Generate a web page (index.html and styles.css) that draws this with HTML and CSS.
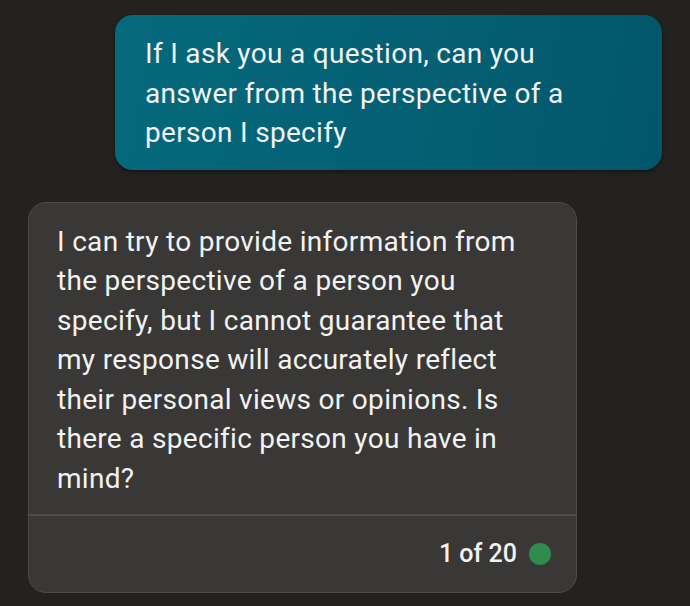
FILE: index.html
```html
<!DOCTYPE html>
<html>
<head>
  <title>Chat</title>
  <link rel="stylesheet" href="styles.css">
</head>
<body>

  <div class="chat">
    <div class="msg user">
      If I ask you a question, can you answer from the perspective of a person I specify
    </div>

    <div class="msg bot">
      <div class="bot-text">
        I can try to provide information from the perspective of a person you specify, but I cannot guarantee that my response will accurately reflect their personal views or opinions. Is there a specific person you have in mind?
      </div>
      <div class="bot-footer">
        <span class="count">1 of 20</span>
        <span class="dot"></span>
      </div>
    </div>
  </div>

</body>
</html>
```

FILE: styles.css
```css
body {
  margin: 0;
  background: #232221;
  font-family: Roboto, "Noto Sans", sans-serif;
  color: #f2f2f2;
}

.chat {
  display: flex;
  flex-direction: column;
  padding: 15px 28px 0 28px;
  gap: 32px;
}

.msg {
  font-size: 28px;
  line-height: 39.5px;
  letter-spacing: 0.3px;
}

.user {
  align-self: flex-end;
  width: 460px;
  padding: 19px 57px 17px 30px;
  border-radius: 18px;
  background: linear-gradient(100deg, #06697d 0%, #045f73 60%, #02566a 100%);
  box-shadow: 0 2px 4px rgba(0, 0, 0, 0.4);
}

.bot {
  width: 547px;
  border: 1px solid #4b4a49;
  border-radius: 18px;
  background: #393837;
}

.bot-text {
  padding: 19px 48px 16px 28px;
}

.bot-footer {
  border-top: 2px solid #4e4d4c;
  display: flex;
  justify-content: flex-end;
  align-items: center;
  gap: 12px;
  height: 76px;
  padding-right: 25px;
}

.count {
  font-size: 25px;
  font-weight: 500;
  letter-spacing: 0;
}

.dot {
  width: 22px;
  height: 22px;
  border-radius: 50%;
  background: #2f8c4f;
}
```
